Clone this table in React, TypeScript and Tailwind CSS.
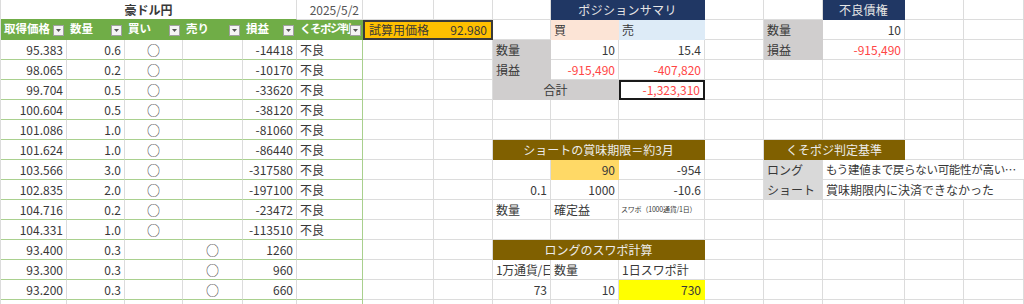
import type { ReactNode } from "react";
import { twMerge } from "tailwind-merge";

const font = { fontFamily: '"Noto Sans CJK JP", "Noto Sans", sans-serif' };

function C({ className, children }: { className?: string; children?: ReactNode }) {
  return (
    <div
      className={twMerge(
        "flex items-center overflow-hidden whitespace-nowrap border-r border-b border-[#dcdcdc] px-[3px] text-[12px] text-[#383838]",
        className
      )}
    >
      {children}
    </div>
  );
}

function Empty({ n }: { n: number }) {
  return (
    <>
      {Array.from({ length: n }).map((_, i) => (
        <C key={i} />
      ))}
    </>
  );
}

function Filter() {
  return (
    <span className="ml-auto mb-[1px] flex h-[11px] w-[11px] shrink-0 items-center justify-center self-end border border-[#a0a0a0] bg-[#f4f4f4]">
      <svg width="5" height="3" viewBox="0 0 5 3">
        <path d="M0 0h5L2.5 3z" fill="#555" />
      </svg>
    </span>
  );
}

function Head({ label, tight }: { label: string; tight?: boolean }) {
  return (
    <C className="border-[#70ad47] bg-[#70ad47] pr-[2px] pb-[2px] text-[11.5px] font-bold text-white">
      <span className={tight ? "tracking-[-1.5px]" : ""}>{label}</span>
      <Filter />
    </C>
  );
}

type Trade = { price: string; qty: string; buy: boolean; pl: string; bad: boolean };

const trades: Trade[] = [
  { price: "95.383", qty: "0.6", buy: true, pl: "-14418", bad: true },
  { price: "98.065", qty: "0.2", buy: true, pl: "-10170", bad: true },
  { price: "99.704", qty: "0.5", buy: true, pl: "-33620", bad: true },
  { price: "100.604", qty: "0.5", buy: true, pl: "-38120", bad: true },
  { price: "101.086", qty: "1.0", buy: true, pl: "-81060", bad: true },
  { price: "101.624", qty: "1.0", buy: true, pl: "-86440", bad: true },
  { price: "103.566", qty: "3.0", buy: true, pl: "-317580", bad: true },
  { price: "102.835", qty: "2.0", buy: true, pl: "-197100", bad: true },
  { price: "104.716", qty: "0.2", buy: true, pl: "-23472", bad: true },
  { price: "104.331", qty: "1.0", buy: true, pl: "-113510", bad: true },
  { price: "93.400", qty: "0.3", buy: false, pl: "1260", bad: false },
  { price: "93.300", qty: "0.3", buy: false, pl: "960", bad: false },
  { price: "93.200", qty: "0.3", buy: false, pl: "660", bad: false },
];

const tb = "border-b-[#a9d08e]";

function TradeRow({ t }: { t?: Trade }) {
  return (
    <>
      <C className={twMerge(tb, "justify-end")}>{t?.price}</C>
      <C className={twMerge(tb, "justify-end")}>{t?.qty}</C>
      <C className={twMerge(tb, "justify-center text-[13px]")}>{t && t.buy ? "○" : ""}</C>
      <C className={twMerge(tb, "justify-center text-[13px]")}>{t && !t.buy ? "○" : ""}</C>
      <C className={twMerge(tb, "justify-end")}>{t?.pl}</C>
      <C className={twMerge(tb, "border-r-[#a9d08e]")}>{t?.bad ? "不良" : ""}</C>
    </>
  );
}

const gray = "bg-[#d0cece] border-[#d0cece]";
const gray2 = "bg-[#d9d9d9] border-[#d9d9d9]";
const navy = "bg-[#203764] border-[#203764] justify-center text-[#e6e6e6] tracking-[0.3px]";
const brown = "bg-[#806000] border-[#806000] justify-center text-[#ececec]";
const red = "justify-end text-[#ff4545]";

export default function App() {
  return (
    <div className="h-[304px] w-[1024px] overflow-hidden bg-white" style={font}>
      <div className="grid grid-cols-[66px_58px_58px_60px_54px_66px_71px_59px_58px_68px_86px_59px_59px_82px_59px_60px_1fr] auto-rows-[20px] border-l border-[#dcdcdc]">
        {/* row 1 */}
        <C className="col-span-5 justify-center border-b-[#70ad47] font-bold">豪ドル円</C>
        <C className="justify-end text-[#555]">2025/5/2</C>
        <Empty n={3} />
        <C className={twMerge("col-span-2", navy)}>ポジションサマリ</C>
        <Empty n={2} />
        <C className={navy}>不良債権</C>
        <Empty n={3} />

        {/* row 2 */}
        <Head label="取得価格" />
        <Head label="数量" />
        <Head label="買い" />
        <Head label="売り" />
        <Head label="損益" />
        <Head label="くそポジ判" tight />
        <C className="col-span-2 justify-between border-2 border-[#3a3a3a] bg-[#ffc000] px-[4px]">
          <span>試算用価格</span>
          <span>92.980</span>
        </C>
        <C />
        <C className="border-[#fce4d6] bg-[#fce4d6]">買</C>
        <C className="border-[#ddebf7] bg-[#ddebf7]">売</C>
        <C />
        <C className={gray}>数量</C>
        <C className="justify-end">10</C>
        <Empty n={3} />

        {/* row 3 */}
        <TradeRow t={trades[0]} />
        <Empty n={2} />
        <C className={gray}>数量</C>
        <C className="justify-end">10</C>
        <C className="justify-end">15.4</C>
        <C />
        <C className={gray}>損益</C>
        <C className={red}>-915,490</C>
        <Empty n={3} />

        {/* row 4 */}
        <TradeRow t={trades[1]} />
        <Empty n={2} />
        <C className={gray}>損益</C>
        <C className={red}>-915,490</C>
        <C className={red}>-407,820</C>
        <Empty n={6} />

        {/* row 5 */}
        <TradeRow t={trades[2]} />
        <Empty n={2} />
        <C className={twMerge("col-span-2 justify-center", gray)}>合計</C>
        <C className={twMerge(red, "border-2 border-[#1a1a1a]")}>-1,323,310</C>
        <Empty n={6} />

        {/* rows 6-7 */}
        <TradeRow t={trades[3]} />
        <Empty n={11} />
        <TradeRow t={trades[4]} />
        <Empty n={11} />

        {/* row 8 */}
        <TradeRow t={trades[5]} />
        <Empty n={2} />
        <C className={twMerge("col-span-3", brown)}>ショートの賞味期限＝約3月</C>
        <C />
        <C className={twMerge("col-span-2", brown)}>くそポジ判定基準</C>
        <Empty n={3} />

        {/* row 9 */}
        <TradeRow t={trades[6]} />
        <Empty n={3} />
        <C className="justify-end border-[#ffd966] bg-[#ffd966]">90</C>
        <C className="justify-end">-954</C>
        <C />
        <C className={gray2}>ロング</C>
        <C className="col-span-4 text-[11.5px] tracking-[-0.3px]">もう建値まで戻らない可能性が高い…</C>

        {/* row 10 */}
        <TradeRow t={trades[7]} />
        <Empty n={2} />
        <C className="justify-end">0.1</C>
        <C className="justify-end">1000</C>
        <C className="justify-end">-10.6</C>
        <C />
        <C className={gray2}>ショート</C>
        <C className="col-span-3">賞味期限内に決済できなかった</C>
        <C />

        {/* row 11 */}
        <TradeRow t={trades[8]} />
        <Empty n={2} />
        <C>数量</C>
        <C>確定益</C>
        <C className="px-[2px] text-[7px] tracking-[-0.2px]">スワポ（1000通貨/1日）</C>
        <Empty n={6} />

        {/* row 12 */}
        <TradeRow t={trades[9]} />
        <Empty n={11} />

        {/* row 13 */}
        <TradeRow t={trades[10]} />
        <Empty n={2} />
        <C className={twMerge("col-span-3", brown)}>ロングのスワポ計算</C>
        <Empty n={6} />

        {/* row 14 */}
        <TradeRow t={trades[11]} />
        <Empty n={2} />
        <C className="tracking-[-0.3px]">1万通貨/日</C>
        <C>数量</C>
        <C>1日スワポ計</C>
        <Empty n={6} />

        {/* row 15 */}
        <TradeRow t={trades[12]} />
        <Empty n={2} />
        <C className="justify-end">73</C>
        <C className="justify-end">10</C>
        <C className="justify-end border-[#ffff00] bg-[#ffff00]">730</C>
        <Empty n={6} />

        {/* row 16 */}
        <TradeRow />
        <Empty n={11} />
      </div>
    </div>
  );
}
